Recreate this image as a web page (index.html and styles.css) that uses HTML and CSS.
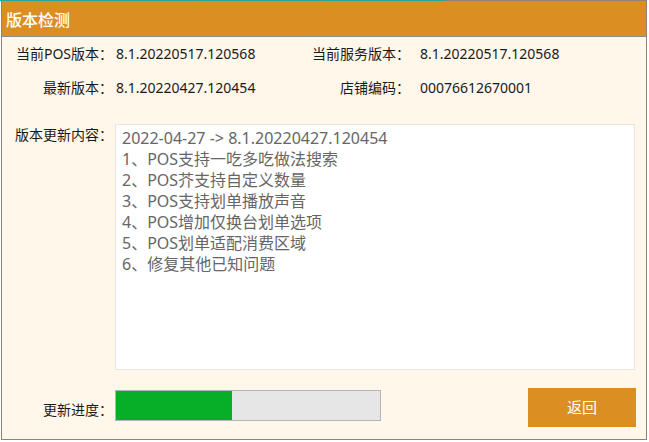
FILE: index.html
```html
<!DOCTYPE html>
<html lang="zh-CN">
<head>
<meta charset="utf-8">
<title>版本检测</title>
<link rel="stylesheet" href="styles.css">
</head>
<body>
<div class="backdrop">
  <span class="seg s1"></span><span class="seg s2"></span><span class="seg s3"></span><span class="seg s4"></span>
</div>
<div class="window">
  <div class="titlebar">版本检测</div>
  <div class="info">
    <div class="label">当前POS版本：</div>
    <div class="value v1">8.1.20220517.120568</div>
    <div class="label">当前服务版本：</div>
    <div class="value v2">8.1.20220517.120568</div>
    <div class="label">最新版本：</div>
    <div class="value v1">8.1.20220427.120454</div>
    <div class="label">店铺编码：</div>
    <div class="value v2">00076612670001</div>
  </div>
  <div class="update">
    <div class="label ulabel">版本更新内容：</div>
    <div class="notes">
      <div>2022-04-27 -&gt; 8.1.20220427.120454</div>
      <div>1、POS支持一吃多吃做法搜索</div>
      <div>2、POS芥支持自定义数量</div>
      <div>3、POS支持划单播放声音</div>
      <div>4、POS增加仅换台划单选项</div>
      <div>5、POS划单适配消费区域</div>
      <div>6、修复其他已知问题</div>
    </div>
  </div>
  <div class="progress-row">
    <div class="label plabel">更新进度：</div>
    <div class="bar"><div class="fill" style="width:44%"></div></div>
    <div class="btn">返回</div>
  </div>
</div>
</body>
</html>
```
FILE: styles.css
```css
html, body {
  margin: 0;
  padding: 0;
  background: #ffffff;
}
body {
  width: 649px;
  height: 442px;
  overflow: hidden;
  position: relative;
  font-family: "Noto Sans", "Noto Sans CJK SC", sans-serif;
  color: #1a1a1a;
}
.backdrop {
  position: absolute;
  left: 0;
  top: 0;
  height: 1px;
  display: flex;
  gap: 1px;
  z-index: 2;
}
.seg {
  display: block;
  height: 1px;
  background: #27a59e;
}
.s1 { width: 68px; }
.s2 { width: 125px; }
.s3 { width: 125px; }
.s4 { width: 124px; }
.window {
  margin-left: 1px;
  width: 646px;
  height: 440px;
  box-sizing: border-box;
  border: 1px solid #8f8474;
  background: #fef7ea;
  display: flex;
  flex-direction: column;
}
.titlebar {
  height: 36px;
  box-sizing: border-box;
  padding: 4px 0 0 4px;
  line-height: 31px;
  background: #db8e21;
  border-bottom: 1px solid #8c8c8c;
  color: #ffffff;
  font-size: 16px;
  font-weight: 500;
  flex: none;
}
.info {
  display: grid;
  grid-template-columns: 111px 199px 98px auto;
  row-gap: 14px;
  padding-top: 7px;
  font-size: 14px;
  line-height: 20px;
}
.label {
  text-align: right;
  font-size: 14px;
  line-height: 20px;
  white-space: nowrap;
}
.value { white-space: nowrap; }
.v1 { padding-left: 3px; }
.v2 { padding-left: 10px; }
.update {
  display: flex;
  margin-top: 26px;
}
.ulabel {
  width: 111px;
  flex: none;
  padding-top: 1px;
}
.notes {
  margin-left: 2px;
  width: 520px;
  height: 246px;
  box-sizing: border-box;
  border: 1px solid #e6e6e6;
  background: #ffffff;
  padding: 3px 6px;
  font-size: 16px;
  line-height: 21px;
  color: #666666;
}
.progress-row {
  display: flex;
  align-items: flex-start;
  margin-top: 18px;
}
.plabel {
  width: 111px;
  flex: none;
  margin-top: 12px;
}
.bar {
  margin-left: 2px;
  margin-top: 2px;
  width: 266px;
  height: 31px;
  box-sizing: border-box;
  border: 1px solid #b5b5b5;
  background: #e6e6e6;
  flex: none;
}
.fill {
  height: 100%;
  background: #06af27;
}
.btn {
  margin-left: auto;
  margin-right: 10px;
  width: 108px;
  height: 39px;
  background: #db8e21;
  color: #ffffff;
  font-size: 15px;
  line-height: 39px;
  text-align: center;
}
```
